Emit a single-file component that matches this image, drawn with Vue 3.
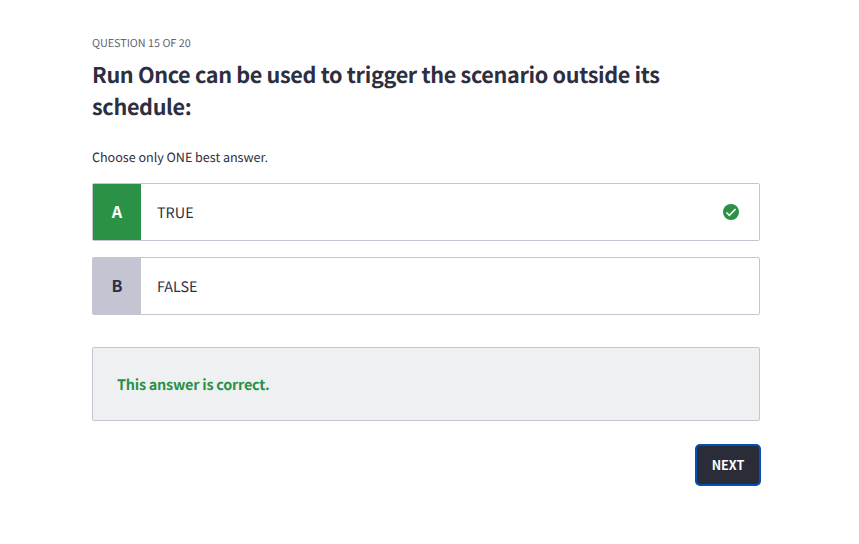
<script setup>
const question = {
  counter: 'Question 15 of 20',
  title: 'Run Once can be used to trigger the scenario outside its schedule:',
  hint: 'Choose only ONE best answer.',
}
const answers = [
  { letter: 'A', text: 'TRUE', correct: true },
  { letter: 'B', text: 'FALSE', correct: false },
]
</script>

<template>
  <main class="quiz">
    <p class="counter">{{ question.counter }}</p>
    <h1 class="title">{{ question.title }}</h1>
    <p class="hint">{{ question.hint }}</p>
    <div class="answers">
      <div v-for="a in answers" :key="a.letter" class="answer" :class="{ correct: a.correct }">
        <span class="letter">{{ a.letter }}</span>
        <span class="text">{{ a.text }}</span>
        <svg v-if="a.correct" class="check" viewBox="0 0 16 16" aria-hidden="true">
          <circle cx="8" cy="8" r="8" fill="#2a9147" />
          <path d="M3.4 8.5 L6.4 11.4 L12.6 5" fill="none" stroke="#fff" stroke-width="1.6" />
        </svg>
      </div>
    </div>
    <div class="feedback">This answer is correct.</div>
    <div class="actions"><button class="next" type="button">Next</button></div>
  </main>
</template>

<style>
body {
  background: #fff;
}
</style>

<style scoped>
.quiz {
  box-sizing: border-box;
  width: 760px;
  padding: 35px 0 0 92px;
  font-family: "Noto Sans CJK JP", "Noto Sans", sans-serif;
  text-rendering: geometricPrecision;
  color: #2d2f41;
}
.counter {
  margin: 0;
  font-size: 10.8px;
  line-height: 16px;
  letter-spacing: -0.02px;
  text-transform: uppercase;
  color: #616475;
}
.title {
  margin: 8px 0 0;
  font-size: 21.6px;
  line-height: 32px;
  font-weight: 700;
  letter-spacing: -0.33px;
}
.hint {
  margin: 24px 0 0;
  font-size: 12.6px;
  line-height: 20px;
  letter-spacing: -0.03px;
}
.answers {
  display: flex;
  flex-direction: column;
  gap: 16px;
  margin-top: 16px;
}
.answer {
  box-sizing: border-box;
  display: flex;
  align-items: center;
  height: 58px;
  border: 1px solid #c3c5d2;
  border-radius: 2px;
}
.letter {
  box-sizing: border-box;
  display: flex;
  align-items: center;
  justify-content: center;
  align-self: stretch;
  width: 48px;
  padding-bottom: 2px;
  background: #c3c5d2;
  font-size: 16.2px;
  font-weight: 700;
}
.correct .letter {
  background: #2a9147;
  color: #fff;
}
.text {
  flex: 1;
  padding-left: 16px;
  font-size: 14.4px;
}
.check {
  width: 16px;
  height: 16px;
  margin-right: 20px;
}
.feedback {
  box-sizing: border-box;
  display: flex;
  align-items: center;
  height: 74px;
  margin-top: 32px;
  padding-left: 24px;
  border: 1px solid #c3c5d2;
  border-radius: 2px;
  background: #eff0f2;
  color: #2a9147;
  font-size: 14.4px;
  font-weight: 700;
  letter-spacing: -0.23px;
}
.actions {
  display: flex;
  justify-content: flex-end;
  margin: 23px -1px 0 0;
}
.next {
  box-sizing: border-box;
  width: 66px;
  height: 42px;
  padding: 0 0 2px;
  border: 2px solid #0050b8;
  border-radius: 5px;
  background: #2a2c38;
  color: #fff;
  font-family: inherit;
  font-size: 12.6px;
  font-weight: 700;
  text-transform: uppercase;
}
</style>
